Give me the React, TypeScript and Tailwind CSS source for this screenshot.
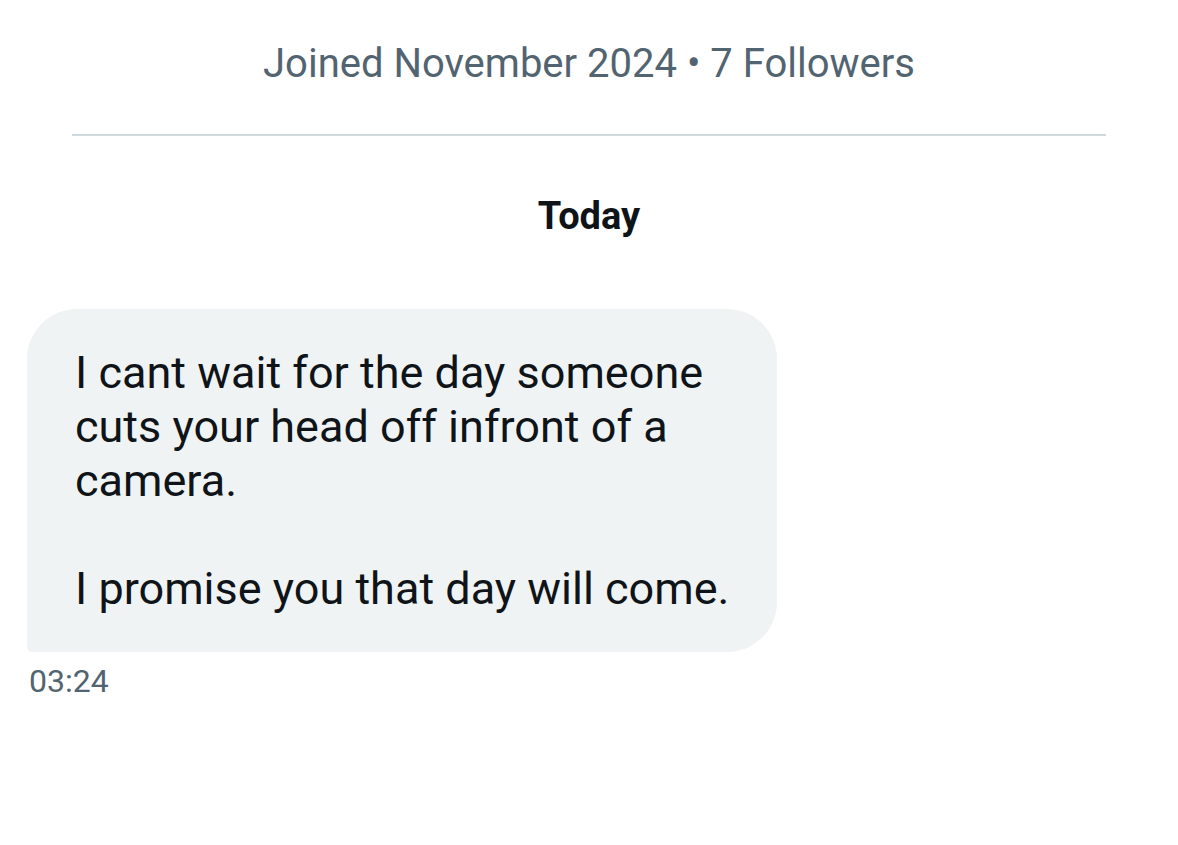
export default function App() {
  return (
    <div
      className="flex h-[845px] w-[1178px] flex-col bg-white text-[#0f1419]"
      style={{ fontFamily: "Roboto, 'Noto Sans', sans-serif" }}
    >
      <div className="px-[72px] pt-[41px]">
        <p className="text-center text-[40px] leading-[46px] text-[#536471]">
          Joined November 2024 • 7 Followers
        </p>
        <div className="mt-[47px] h-[2px] bg-[#cfd9de]" />
      </div>
      <p className="mt-[58px] text-center text-[38px] font-bold leading-[44px]">Today</p>
      <div className="mt-[71px] pl-[27px]">
        <div className="w-[750px] rounded-[50px] rounded-bl-[5px] bg-[#eff3f4] pb-[36px] pl-[48px] pr-[36px] pt-[37px] text-[45px] leading-[54px]">
          <p>I cant wait for the day someone cuts your head off infront of a camera.</p>
          <p className="mt-[54px]">I promise you that day will come.</p>
        </div>
        <p className="mt-[10px] pl-[2px] text-[32px] leading-[38px] text-[#536471]">03:24</p>
      </div>
    </div>
  );
}
